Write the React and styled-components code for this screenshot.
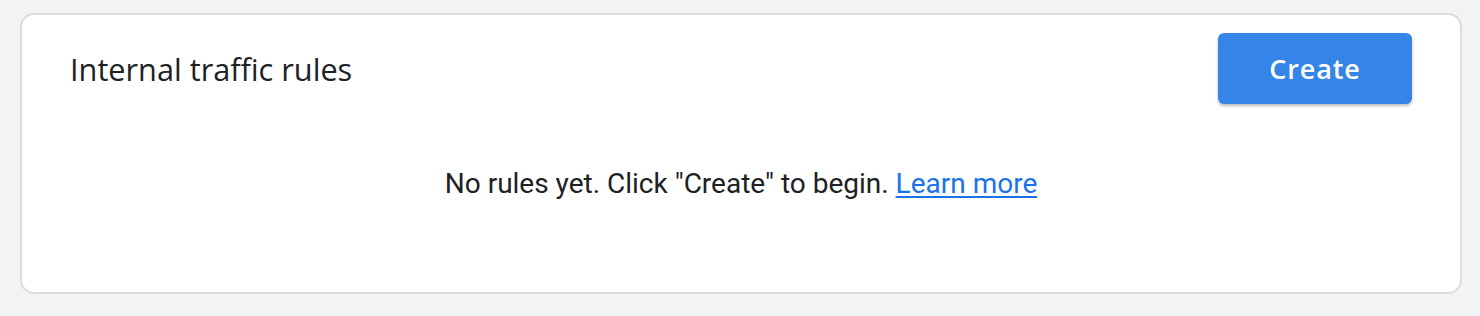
import React from 'react';
import styled, { createGlobalStyle } from 'styled-components';

const GlobalStyle = createGlobalStyle`
  html, body {
    margin: 0;
    padding: 0;
    background: #f1f3f4;
  }
  body {
    font-family: Roboto, "Liberation Sans", Arial, sans-serif;
    -webkit-font-smoothing: antialiased;
  }
`;

const Page = styled.div`
  padding: 13px 18px 22px 20px;
  box-sizing: border-box;
  width: 1480px;
  height: 316px;
`;

const Card = styled.section`
  box-sizing: border-box;
  height: 281px;
  background: #ffffff;
  border: 2px solid #dadce0;
  border-radius: 14px;
  padding: 18px 48px 0 48px;
  display: flex;
  flex-direction: column;
`;

const Header = styled.div`
  display: flex;
  align-items: center;
  justify-content: space-between;
`;

const Title = styled.h2`
  margin: 0;
  font-family: "Open Sans", Roboto, sans-serif;
  font-weight: 400;
  font-size: 30.7px;
  color: #202124;
  letter-spacing: 0;
`;

const Button = styled.button`
  width: 194px;
  height: 71px;
  border: none;
  border-radius: 6px;
  background: #3584e8;
  color: #ffffff;
  font-family: "Open Sans", Roboto, sans-serif;
  font-size: 27px;
  font-weight: 600;
  letter-spacing: 0.9px;
  box-shadow: 0 2px 3px rgba(60, 64, 67, 0.35);
  cursor: pointer;
`;

const Empty = styled.p`
  margin: 63px 0 0;
  text-align: center;
  font-size: 28px;
  line-height: 34px;
  color: #202124;
`;

const Link = styled.a`
  color: #1a73e8;
  text-decoration: underline;
  text-underline-offset: 3px;
`;

export default function App() {
  return (
    <>
      <GlobalStyle />
      <Page>
        <Card>
          <Header>
            <Title>Internal traffic rules</Title>
            <Button>Create</Button>
          </Header>
          <Empty>
            No rules yet. Click "Create" to begin. <Link href="#">Learn more</Link>
          </Empty>
        </Card>
      </Page>
    </>
  );
}
